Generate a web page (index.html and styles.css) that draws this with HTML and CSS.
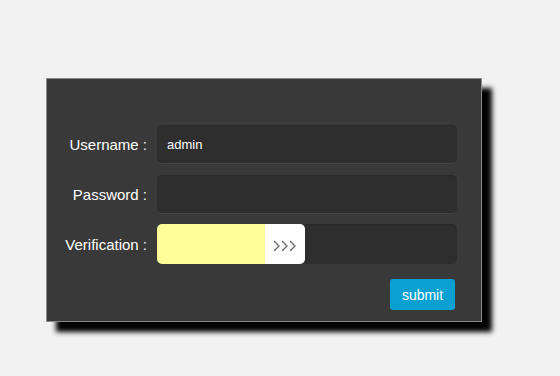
FILE: index.html
```html
<!DOCTYPE html>
<html lang="en">
<head>
    <meta charset="UTF-8">
    <title>login</title>
    <link rel="stylesheet" href="styles.css">
</head>
<body>
	<div class="login-panel">
		<div class="form-row">
			<label class="form-label" for="username">Username :</label>
			<input id="username" class="form-input" type="text" value="admin">
		</div>
		<div class="form-row">
			<label class="form-label" for="password">Password :</label>
			<input id="password" class="form-input" type="password">
		</div>
		<div class="form-row verify-row">
			<label class="form-label">Verification :</label>
			<div class="form-input verify-track">
				<div class="verify-fill"></div>
				<div class="verify-handle">
					<svg width="24" height="12" viewBox="0 0 24 12">
						<polyline points="1,1 6,6 1,11" fill="none" stroke="#666" stroke-width="1.3"/>
						<polyline points="9,1 14,6 9,11" fill="none" stroke="#666" stroke-width="1.3"/>
						<polyline points="17,1 22,6 17,11" fill="none" stroke="#666" stroke-width="1.3"/>
					</svg>
				</div>
			</div>
		</div>
		<div class="actions">
			<button class="submit-btn" type="button">submit</button>
		</div>
	</div>
</body>
</html>
```

FILE: styles.css
```css
html, body {
	margin: 0;
	padding: 0;
	background: #f2f2f2;
	font-family: "Liberation Sans", Arial, sans-serif;
}

body {
	min-height: 376px;
	padding-top: 78px;
	box-sizing: border-box;
}

.login-panel {
	margin-left: 46px;
	width: 436px;
	height: 244px;
	box-sizing: border-box;
	background: #393939;
	border: 1px solid #8a8a8a;
	box-shadow: 10px 10px 5px #000;
	padding-top: 46px;
}

.form-row {
	display: flex;
	align-items: center;
	gap: 10px;
	margin-bottom: 11px;
}

.verify-row {
	margin-top: -1px;
}

.form-label {
	width: 100px;
	text-align: right;
	color: #fff;
	font-size: 15px;
}

.form-input {
	width: 300px;
	height: 39px;
	box-sizing: border-box;
	background: #2e2e2e;
	border: none;
	border-bottom: 1px solid #454545;
	border-radius: 5px;
	box-shadow: inset 0 1px 1px #2a2a2a;
	color: #fff;
	font-family: "Liberation Sans", Arial, sans-serif;
	font-size: 13px;
	padding: 0 10px;
	outline: none;
}

.verify-track {
	display: flex;
	padding: 0;
	height: 40px;
	border-bottom: none;
}

.verify-fill {
	width: 108px;
	height: 40px;
	background: #ffff99;
	border-radius: 5px 0 0 5px;
}

.verify-handle {
	width: 40px;
	height: 40px;
	background: #fff;
	border-radius: 0 5px 5px 0;
	display: flex;
	align-items: center;
	justify-content: center;
	padding-top: 3px;
	box-sizing: border-box;
}

.actions {
	display: flex;
	justify-content: flex-end;
	padding-right: 26px;
	margin-top: 15px;
}

.submit-btn {
	width: 65px;
	height: 31px;
	background: #0aa0d2;
	color: #fff;
	border: none;
	border-radius: 3px;
	font-family: "Liberation Sans", Arial, sans-serif;
	font-size: 14px;
	padding: 0;
}
```
